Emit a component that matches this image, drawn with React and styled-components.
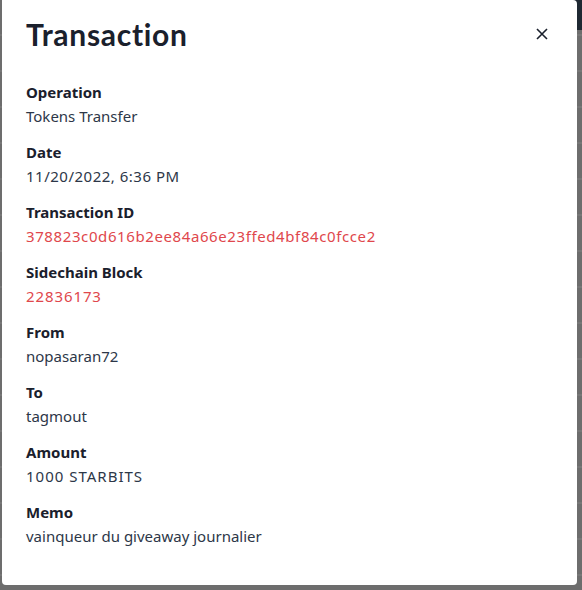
import React from "react";
import styled, { createGlobalStyle } from "styled-components";

const GlobalStyle = createGlobalStyle`
  html, body {
    margin: 0;
    padding: 0;
    background: #6d6d6d;
  }
  body {
    font-family: "Noto Sans", Lato, sans-serif;
  }
`;

const Backdrop = styled.div`
  width: 582px;
  height: 590px;
  box-sizing: border-box;
  padding: 0 5px 5px 2px;
  background:
    linear-gradient(#1f2933, #1f2933) top right / 10px 30px no-repeat,
    repeating-linear-gradient(
      to bottom,
      #6d6d6d 0px,
      #6d6d6d 34px,
      #777 34px,
      #777 36px
    );
  background-color: #6d6d6d;
`;

const Modal = styled.div`
  height: 100%;
  background: #fff;
  border-radius: 0 4px 4px 4px;
  display: flex;
  flex-direction: column;
  box-sizing: border-box;
`;

const Header = styled.div`
  display: flex;
  align-items: center;
  justify-content: space-between;
  padding: 10px 19px 0 24px;
  height: 48px;
`;

const Title = styled.h1`
  margin: 0;
  font-family: Lato, "Noto Sans", sans-serif;
  font-size: 30px;
  font-weight: 700;
  color: #1a202c;
  letter-spacing: 0.7px;
`;

const CloseButton = styled.button`
  border: none;
  background: none;
  padding: 0;
  width: 32px;
  height: 32px;
  display: flex;
  align-items: center;
  justify-content: center;
  color: #1a202c;
  cursor: pointer;
`;

const Body = styled.div`
  padding: 22px 24px 0 24px;
  display: flex;
  flex-direction: column;
  gap: 12px;
`;

const Field = styled.div`
  display: flex;
  flex-direction: column;
`;

const Label = styled.div`
  font-size: 15px;
  font-weight: 700;
  line-height: 24px;
  color: #1a202c;
`;

const Value = styled.div`
  font-size: 15px;
  line-height: 24px;
  letter-spacing: ${(props) => props.$spacing || 0}px;
  color: ${(props) => (props.$link ? "#e0474c" : "#2d3748")};
`;

const fields = [
  { label: "Operation", value: "Tokens Transfer" },
  { label: "Date", value: "11/20/2022, 6:36 PM", spacing: 0.5 },
  {
    label: "Transaction ID",
    value: "378823c0d616b2ee84a66e23ffed4bf84c0fcce2",
    link: true,
    spacing: 0.6,
  },
  { label: "Sidechain Block", value: "22836173", link: true, spacing: 0.9 },
  { label: "From", value: "nopasaran72" },
  { label: "To", value: "tagmout" },
  { label: "Amount", value: "1000 STARBITS", spacing: 1 },
  { label: "Memo", value: "vainqueur du giveaway journalier" },
];

const App = () => {
  return (
    <>
      <GlobalStyle />
      <Backdrop>
        <Modal>
          <Header>
            <Title>Transaction</Title>
            <CloseButton aria-label="Close">
              <svg width="12" height="12" viewBox="0 0 12 12">
                <path
                  d="M1 1 L11 11 M11 1 L1 11"
                  stroke="currentColor"
                  strokeWidth="1.6"
                  fill="none"
                />
              </svg>
            </CloseButton>
          </Header>
          <Body>
            {fields.map((f) => (
              <Field key={f.label}>
                <Label>{f.label}</Label>
                <Value $link={f.link} $spacing={f.spacing}>
                  {f.value}
                </Value>
              </Field>
            ))}
          </Body>
        </Modal>
      </Backdrop>
    </>
  );
};

export default App;
